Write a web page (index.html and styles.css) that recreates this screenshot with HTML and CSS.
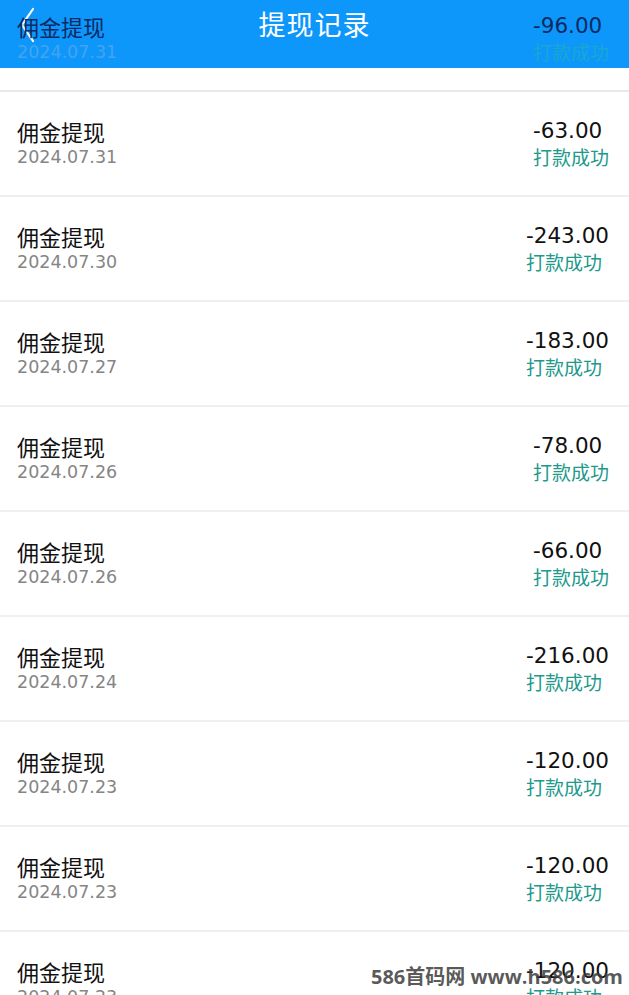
FILE: index.html
```html
<!DOCTYPE html>
<html lang="zh-CN">
<head>
    <meta charset="UTF-8">
    <meta name="viewport" content="width=device-width, initial-scale=1.0">
    <title>提现记录</title>
    <link rel="stylesheet" href="styles.css">
</head>
<body>
    <div class="page">
        <div class="nav-bar">
            <svg class="nav-back" width="18" height="38" viewBox="0 0 18 38">
                <polyline points="14,3 3,19 14,35" fill="none" stroke="#fff" stroke-width="2.2" stroke-linecap="round" stroke-linejoin="round"/>
            </svg>
            <span class="nav-title">提现记录</span>
        </div>

        <ul class="record-list">
            <li class="record under-bar">
                <div class="record-left">
                    <span class="record-name">佣金提现</span>
                    <span class="record-date">2024.07.31</span>
                </div>
                <div class="record-right">
                    <span class="record-amount">-96.00</span>
                    <span class="record-status">打款成功</span>
                </div>
            </li>
            <li class="record">
                <div class="record-left">
                    <span class="record-name">佣金提现</span>
                    <span class="record-date">2024.07.31</span>
                </div>
                <div class="record-right">
                    <span class="record-amount">-63.00</span>
                    <span class="record-status">打款成功</span>
                </div>
            </li>
            <li class="record">
                <div class="record-left">
                    <span class="record-name">佣金提现</span>
                    <span class="record-date">2024.07.30</span>
                </div>
                <div class="record-right">
                    <span class="record-amount">-243.00</span>
                    <span class="record-status">打款成功</span>
                </div>
            </li>
            <li class="record">
                <div class="record-left">
                    <span class="record-name">佣金提现</span>
                    <span class="record-date">2024.07.27</span>
                </div>
                <div class="record-right">
                    <span class="record-amount">-183.00</span>
                    <span class="record-status">打款成功</span>
                </div>
            </li>
            <li class="record">
                <div class="record-left">
                    <span class="record-name">佣金提现</span>
                    <span class="record-date">2024.07.26</span>
                </div>
                <div class="record-right">
                    <span class="record-amount">-78.00</span>
                    <span class="record-status">打款成功</span>
                </div>
            </li>
            <li class="record">
                <div class="record-left">
                    <span class="record-name">佣金提现</span>
                    <span class="record-date">2024.07.26</span>
                </div>
                <div class="record-right">
                    <span class="record-amount">-66.00</span>
                    <span class="record-status">打款成功</span>
                </div>
            </li>
            <li class="record">
                <div class="record-left">
                    <span class="record-name">佣金提现</span>
                    <span class="record-date">2024.07.24</span>
                </div>
                <div class="record-right">
                    <span class="record-amount">-216.00</span>
                    <span class="record-status">打款成功</span>
                </div>
            </li>
            <li class="record">
                <div class="record-left">
                    <span class="record-name">佣金提现</span>
                    <span class="record-date">2024.07.23</span>
                </div>
                <div class="record-right">
                    <span class="record-amount">-120.00</span>
                    <span class="record-status">打款成功</span>
                </div>
            </li>
            <li class="record">
                <div class="record-left">
                    <span class="record-name">佣金提现</span>
                    <span class="record-date">2024.07.23</span>
                </div>
                <div class="record-right">
                    <span class="record-amount">-120.00</span>
                    <span class="record-status">打款成功</span>
                </div>
            </li>
            <li class="record">
                <div class="record-left">
                    <span class="record-name">佣金提现</span>
                    <span class="record-date">2024.07.23</span>
                </div>
                <div class="record-right">
                    <span class="record-amount">-120.00</span>
                    <span class="record-status">打款成功</span>
                </div>
            </li>
        </ul>

        <div class="watermark">586首码网 www.h586.com</div>
    </div>
</body>
</html>
```

FILE: styles.css
```css
html, body {
    margin: 0;
    padding: 0;
    background: #fff;
}

body {
    font-family: "Noto Sans CJK SC", "Liberation Sans", sans-serif;
    color: #111;
}

.page {
    position: relative;
    height: 995px;
    overflow: hidden;
}

/* 顶部导航 */
.nav-bar {
    position: absolute;
    top: 0;
    left: 0;
    right: 0;
    height: 68px;
    background: #0e97fb;
    z-index: 0;
}

.nav-back {
    position: absolute;
    left: 19px;
    top: 6px;
}

.nav-title {
    display: block;
    text-align: center;
    color: #fff;
    font-size: 27px;
    line-height: 48px;
    letter-spacing: 1px;
}

/* 记录列表 */
.record-list {
    position: relative;
    z-index: 1;
    list-style: none;
    margin: -13px 0 0;
    padding: 0;
}

.record {
    display: flex;
    align-items: center;
    justify-content: space-between;
    height: 103px;
    padding: 0 20px 0 17px;
    border-bottom: 2px solid #efefef;
}

.record-left,
.record-right {
    display: flex;
    flex-direction: column;
    align-items: flex-start;
}

.record-name {
    font-size: 22px;
    line-height: 26px;
    color: #111;
}

.record-date {
    font-family: "DejaVu Sans", "Liberation Sans", sans-serif;
    font-size: 17.5px;
    line-height: 26px;
    color: #858585;
}

.record-amount {
    font-family: "DejaVu Sans", "Liberation Sans", sans-serif;
    font-size: 21.5px;
    line-height: 26px;
    color: #111;
}

.record-status {
    font-size: 19px;
    line-height: 26px;
    color: #21998b;
}

/* 被导航栏压住的第一行 */
.under-bar {
    border-bottom-color: #e8e8e8;
}

.under-bar .record-name,
.under-bar .record-amount {
    color: #0b2a63;
}

.under-bar .record-date {
    color: #45a3ee;
}

.under-bar .record-status {
    color: #1aa7cf;
}

.watermark {
    position: absolute;
    right: 6px;
    bottom: 6px;
    z-index: 2;
    font-family: "Open Sans", "Noto Sans CJK SC", sans-serif;
    font-weight: 700;
    font-size: 20px;
    line-height: 24px;
    color: rgba(60, 60, 60, 0.85);
    white-space: nowrap;
}
```
